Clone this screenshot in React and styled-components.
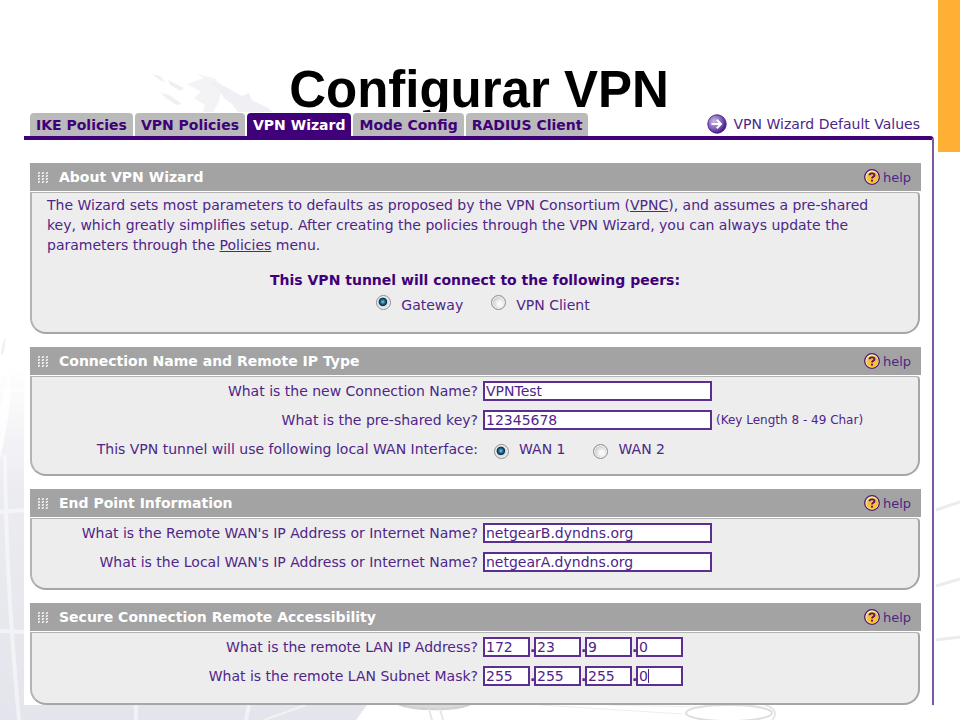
import * as React from "react";
import styled, { createGlobalStyle } from 'styled-components';

const PURPLE = '#3f0079';
const INK = '#4f2588';

const GlobalStyle = createGlobalStyle`
  * {
    box-sizing: border-box;
  }
  body {
    margin: 0;
    background: white;
    color: ${INK};
    font-family: "DejaVu Sans", Verdana, sans-serif;
    font-size: 14px;
  }
`;

const Slide = styled.div`
  position: relative;
  min-height: 100vh;
  overflow: hidden;
  padding: 62px 26px 15px 24px;
`;

const BackdropSvg = styled.svg`
  position: absolute;
  inset: 0;
  width: 100%;
  height: 100%;
`;

const Accent = styled.div`
  position: absolute;
  top: 0;
  right: 0;
  width: 22px;
  height: 152px;
  background: #fdb034;
`;

const Title = styled.h1`
  position: relative;
  margin: 0;
  height: 50px;
  overflow: hidden;
  text-align: center;
  color: black;
  font: bold 51px/56px "Liberation Sans", Arial, sans-serif;
`;

const Screen = styled.div`
  position: relative;
`;

const TopBar = styled.div`
  display: flex;
  align-items: flex-end;
  justify-content: space-between;
  height: 24px;
  padding: 0 14px 0 6px;
  background: white;
`;

const Tabs = styled.nav`
  display: flex;
  gap: 2px;
`;

const Tab = styled.button`
  height: 23px;
  padding: 0 6px;
  border: 0;
  border-radius: 4px 4px 0 0;
  background: ${({ $active }) => $active ? PURPLE : '#bababa'};
  color: ${({ $active }) => $active ? 'white' : PURPLE};
  font: bold 14px/24px "DejaVu Sans", Verdana, sans-serif;
  white-space: nowrap;
`;

const DefaultsLink = styled.a`
  display: flex;
  align-items: center;
  gap: 7px;
  height: 24px;
  color: ${INK};
  text-decoration: none;
  white-space: nowrap;
`;

const Frame = styled.div`
  display: flex;
  flex-direction: column;
  gap: 13px;
  border-top: 4px solid ${PURPLE};
  border-right: 2px solid #7a58a8;
  border-radius: 0 4px 0 0;
  padding: 23px 11px 0 6px;
  background: white;
`;

const SectionHead = styled.header`
  display: flex;
  align-items: center;
  gap: 11px;
  height: 28px;
  margin-bottom: 1px;
  padding: 0 10px 0 8px;
  background: #a3a3a3;
  color: white;
`;

const SectionTitle = styled.h2`
  flex: 1;
  margin: 0;
  font-size: 14px;
  line-height: 28px;
`;

const HelpLink = styled.a`
  display: flex;
  align-items: center;
  gap: 3px;
  color: ${INK};
  font-size: 13px;
  text-decoration: none;
`;

const SectionBody = styled.div`
  min-height: ${({ $height }) => $height}px;
  margin-right: 1px;
  padding: 0 15px;
  border: solid;
  border-width: 1px 2px 2px 2px;
  border-color: #b4b4b4 #a6a6a6 #a6a6a6 #b4b4b4;
  border-radius: 0 4px 16px 16px;
  background: #ededed;
`;

const Intro = styled.p`
  margin: 0;
  padding: 2px 20px 0 0;
  line-height: 20px;
  a {
    color: inherit;
  }
`;

const Peers = styled.fieldset`
  margin: 0;
  padding: 15px 0 0;
  border: 0;
  text-align: center;
  legend {
    float: left;
    width: 100%;
    padding: 0;
    color: ${PURPLE};
    font-weight: bold;
    line-height: 20px;
  }
`;

const PeerOptions = styled.div`
  clear: both;
  display: flex;
  justify-content: center;
  gap: 28px;
  padding: 5px 0 0 16px;
`;

const RadioLabel = styled.label`
  display: flex;
  align-items: ${({ $raised }) => $raised ? 'flex-start' : 'flex-end'};
  gap: 10px;
  line-height: 20px;
  white-space: nowrap;
`;

const Radio = styled.input`
  appearance: none;
  width: 15px;
  height: 15px;
  margin: 0;
  border: 1px solid #8e8f8f;
  border-radius: 50%;
  background: radial-gradient(circle at 60% 60%, #f8f8f8 20%, #c4c7c9 70%);
  box-shadow: inset 0 0 0 1px #f4f4f4;
  &:checked {
    background: radial-gradient(circle at 45% 45%, #7fd0e8 0, #1c6a8c 22%, #0c2c44 38%, #d5dadd 46%, #e8e8e8 70%);
  }
`;

const Form = styled.div`
  display: grid;
  grid-template-columns: 446px 1fr;
  column-gap: 5px;
  grid-auto-rows: 28px;
  row-gap: 1px;
  margin-left: -15px;
  align-items: center;
`;

const FieldLabel = styled.label`
  text-align: right;
  white-space: nowrap;
`;

const FieldValue = styled.div`
  display: flex;
  align-items: center;
  gap: 4px;
`;

const TextInput = styled.input`
  width: ${({ $octet }) => $octet ? 47 : 229}px;
  height: 20px;
  padding: 0 1px;
  border: 2px solid #5b2f92;
  border-radius: 0;
  outline: none;
  background: white;
  color: ${INK};
  font: 14px "DejaVu Sans", Verdana, sans-serif;
  &[autofocus], &:focus {
    caret-color: transparent;
    background: linear-gradient(${INK}, ${INK}) 10px 1px / 1px 14px no-repeat white;
  }
`;

const Note = styled.span`
  font-size: 12px;
  white-space: nowrap;
`;

const Octets = styled.div`
  display: flex;
  align-items: center;
  b {
    width: 4px;
  }
`;

const Choices = styled.div`
  display: flex;
  gap: 28px;
  padding-left: 11px;
`;

const GripIcon = () => (
  <svg width="10" height="11" viewBox="0 0 10 11" aria-hidden="true">
    { [0, 4, 8].map((x) => [0, 3, 6, 9].map((y) => (
      <path key={ `${x}-${y}` } d={ `M${x} ${y + 1.6}l1.8 -1.2` } stroke="white" strokeWidth="1.3" />
    ))) }
  </svg>
);

const HelpIcon = () => (
  <svg width="16" height="16" viewBox="0 0 16 16" aria-hidden="true">
    <circle cx="8" cy="8" r="7.3" fill="#fff0c0" stroke="#4b1a6b" strokeWidth="1.3" />
    <circle cx="8.4" cy="8.4" r="5.9" fill="#fdbf2d" />
    <path d="M5.6 6.2C5.6 3.8 10.5 3.7 10.5 6.2C10.5 7.8 8 7.5 8 9.5" fill="none" stroke="#4b1a6b" strokeWidth="1.9" />
    <path d="M7 10.7H9V12.4H7z" fill="#4b1a6b" />
  </svg>
);

const ArrowIcon = () => (
  <svg width="20" height="20" viewBox="0 0 20 20" aria-hidden="true">
    <defs>
      <radialGradient id="ball" cx="0.35" cy="0.35" r="0.7">
        <stop offset="0" stopColor="#c9bbe8" />
        <stop offset="0.6" stopColor="#7d5cb8" />
        <stop offset="1" stopColor="#3f1280" />
      </radialGradient>
    </defs>
    <circle cx="10" cy="10" r="9.2" fill="url(#ball)" stroke="#4a2390" strokeWidth="1" />
    <path d="M4.5 10H14M9.8 5.8L14 10L9.8 14.2" fill="none" stroke="white" strokeWidth="2" />
  </svg>
);

// faint world map, globe grid and table shapes behind the screen
const Backdrop = () => (
  <BackdropSvg viewBox="0 0 960 720" preserveAspectRatio="none" aria-hidden="true">
    <defs>
      <linearGradient id="globe" x1="0" y1="0" x2="0" y2="1">
        <stop offset="0" stopColor="#e6e6ee" stopOpacity="0" />
        <stop offset="0.35" stopColor="#e6e6ee" stopOpacity="0.8" />
        <stop offset="1" stopColor="#e4e4ec" />
      </linearGradient>
    </defs>
    <g fill="#f0f0f4">
      <path d="M152 74L160 76L166 83L158 79zM168 80L184 88L181 91L170 85zM160 92L171 96L182 104L176 105L166 98z" />
      <path d="M187 84L204 78L197 74L214 78L222 85L219 102L213 112H203L205 105L194 98L201 92z" opacity="0.8" />
      <path d="M208 80L226 87L242 96L249 93L252 100L268 108L273 112H238L232 104L224 98L219 90z" />
      <path d="M2 345L6 336L4 352L1 356z" />
    </g>
    <path d="M0 378L10 366L24 372V705H367L356 720H0z" fill="url(#globe)" />
    <path d="M9 372C13 395 8 420 3 446L0 460V405z" fill="white" opacity="0.8" />
    <g fill="none" stroke="white" strokeWidth="4" opacity="0.5">
      <path d="M5 455C6 550 10 620 19 720M0 512L24 510M0 631L24 632M0 390H24M136 705V720M249 705L246 720" />
      <path d="M264 720L306 705" strokeWidth="2" />
    </g>
    <g fill="none" stroke="#e6e6e6" strokeWidth="2">
      <path d="M398 704C414 711 456 711 471 704" fill="#d9d9d9" stroke="#d0d0d0" />
      <path d="M429 709L432 720M440 709L443 720" />
      <path d="M540 705L682 714M610 705L700 707" stroke="#efefef" strokeWidth="1" />
      <ellipse cx="729" cy="713" rx="43" ry="8" stroke="#dedede" />
      <path d="M765 705C778 709 776 716 772 720" />
      <path d="M936 510L960 502M936 586L960 579M936 640L960 637" stroke="#ececec" strokeWidth="3" />
    </g>
  </BackdropSvg>
);

const Section = ({ title, height, children }) => (
  <section>
    <SectionHead>
      <GripIcon />
      <SectionTitle>{ title }</SectionTitle>
      <HelpLink href="#help"><HelpIcon />help</HelpLink>
    </SectionHead>
    <SectionBody $height={ height }>{ children }</SectionBody>
  </section>
);

const TextRow = ({ id, label, value, note }) => (
  <>
    <FieldLabel htmlFor={ id }>{ label }</FieldLabel>
    <FieldValue>
      <TextInput id={ id } defaultValue={ value } />
      { note && <Note>{ note }</Note> }
    </FieldValue>
  </>
);

const AddressRow = ({ id, label, octets, focused }) => (
  <>
    <FieldLabel htmlFor={ `${id}0` }>{ label }</FieldLabel>
    <Octets>
      { octets.map((octet, index) => (
        <React.Fragment key={ index }>
          { index > 0 && <b>.</b> }
          <TextInput
            $octet
            id={ `${id}${index}` }
            aria-label={ `${label} ${index + 1}` }
            defaultValue={ octet }
            autoFocus={ focused && index === 3 }
          />
        </React.Fragment>
      )) }
    </Octets>
  </>
);

const tabs = ['IKE Policies', 'VPN Policies', 'VPN Wizard', 'Mode Config', 'RADIUS Client'];

const App = () => {
  const [tab, setTab] = React.useState('VPN Wizard');
  return (
    <Slide>
      <GlobalStyle />
      <Backdrop />
      <Accent />
      <Title>Configurar VPN</Title>
      <Screen>
        <TopBar>
          <Tabs>
            { tabs.map((name) => (
              <Tab key={ name } $active={ name === tab } onClick={ () => setTab(name) }>{ name }</Tab>
            )) }
          </Tabs>
          <DefaultsLink href="#defaults"><ArrowIcon />VPN Wizard Default Values</DefaultsLink>
        </TopBar>
        <Frame>
          <Section title="About VPN Wizard" height={ 142 }>
            <Intro>
              The Wizard sets most parameters to defaults as proposed by the VPN Consortium (<a href="#vpnc">VPNC</a>), and assumes a pre-shared
              key, which greatly simplifies setup. After creating the policies through the VPN Wizard, you can always update the
              parameters through the <a href="#policies">Policies</a> menu.
            </Intro>
            <Peers>
              <legend>This VPN tunnel will connect to the following peers:</legend>
              <PeerOptions>
                <RadioLabel $raised><Radio type="radio" name="peer" defaultChecked />Gateway</RadioLabel>
                <RadioLabel $raised><Radio type="radio" name="peer" />VPN Client</RadioLabel>
              </PeerOptions>
            </Peers>
          </Section>
          <Section title="Connection Name and Remote IP Type" height={ 100 }>
            <Form>
              <TextRow id="name" label="What is the new Connection Name?" value="VPNTest" />
              <TextRow id="key" label="What is the pre-shared key?" value="12345678" note="(Key Length 8 - 49 Char)" />
              <FieldLabel as="span" id="wan">This VPN tunnel will use following local WAN Interface:</FieldLabel>
              <Choices role="radiogroup" aria-labelledby="wan">
                <RadioLabel><Radio type="radio" name="wan" defaultChecked />WAN 1</RadioLabel>
                <RadioLabel><Radio type="radio" name="wan" />WAN 2</RadioLabel>
              </Choices>
            </Form>
          </Section>
          <Section title="End Point Information" height={ 72 }>
            <Form>
              <TextRow id="remote" label="What is the Remote WAN's IP Address or Internet Name?" value="netgearB.dyndns.org" />
              <TextRow id="local" label="What is the Local WAN's IP Address or Internet Name?" value="netgearA.dyndns.org" />
            </Form>
          </Section>
          <Section title="Secure Connection Remote Accessibility" height={ 73 }>
            <Form>
              <AddressRow id="lan" label="What is the remote LAN IP Address?" octets={ ['172', '23', '9', '0'] } />
              <AddressRow id="mask" label="What is the remote LAN Subnet Mask?" octets={ ['255', '255', '255', '0'] } focused />
            </Form>
          </Section>
        </Frame>
      </Screen>
    </Slide>
  );
};

export default App;
